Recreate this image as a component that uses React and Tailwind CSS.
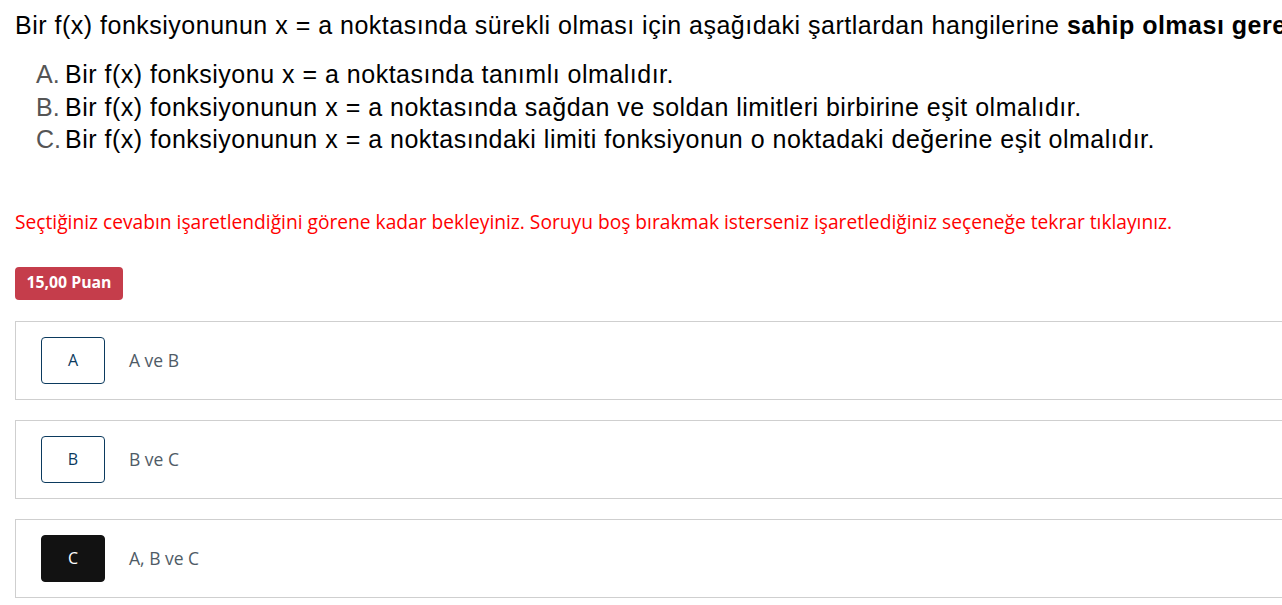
const options = [
  { key: "A", text: "A ve B", selected: false },
  { key: "B", text: "B ve C", selected: false },
  { key: "C", text: "A, B ve C", selected: true },
];

const items = [
  { key: "A.", text: "Bir f(x) fonksiyonu x = a noktasında tanımlı olmalıdır." },
  { key: "B.", text: "Bir f(x) fonksiyonunun x = a noktasında sağdan ve soldan limitleri birbirine eşit olmalıdır." },
  { key: "C.", text: "Bir f(x) fonksiyonunun x = a noktasındaki limiti fonksiyonun o noktadaki değerine eşit olmalıdır." },
];

const App = () => {
  return (
    <div className="w-full min-h-screen overflow-hidden bg-white">
      <div className="w-[1400px] px-[15px] pt-[9px]">
        {/* question runs past the viewport, clipped like the original page */}
        <p className="font-['Liberation_Sans',Arial,sans-serif] text-[25px] leading-[32px] tracking-[0.5px] text-black whitespace-nowrap">
          Bir f(x) fonksiyonunun x = a noktasında sürekli olması için aşağıdaki şartlardan hangilerine{" "}
          <b>sahip olması gerekir?</b>
        </p>

        <ul className="mt-[17px] pl-[21px] font-['Liberation_Sans',Arial,sans-serif] text-[25px] leading-[32.5px] tracking-[0.5px] text-black">
          {items.map((it) => (
            <li key={it.key} className="flex whitespace-nowrap">
              <span className="w-[29px] text-[#555] font-light tracking-normal">{it.key}</span>
              <span>{it.text}</span>
            </li>
          ))}
        </ul>

        <p className="mt-[54px] font-['Open_Sans',sans-serif] text-[19.2px] leading-[24px] text-[#ff0000] whitespace-nowrap">
          Seçtiğiniz cevabın işaretlendiğini görene kadar bekleyiniz. Soruyu boş bırakmak isterseniz işaretlediğiniz seçeneğe tekrar tıklayınız.
        </p>

        <div className="mt-[33px] inline-flex h-[33px] w-[108px] items-center justify-center rounded-[4px] bg-[#c53d4b] font-['Open_Sans',sans-serif] text-[15.8px] font-bold text-white">
          15,00 Puan
        </div>

        <div className="mt-[21px] flex flex-col gap-[20px] font-['Open_Sans',sans-serif]">
          {options.map((o) => (
            <div
              key={o.key}
              className="flex h-[79px] items-center border border-[#cfcfcf] pl-[25px]"
            >
              <div
                className={
                  o.selected
                    ? "flex h-[47px] w-[64px] items-center justify-center rounded-[4px] border border-[#121212] bg-[#121212] text-[16px] text-white"
                    : "flex h-[47px] w-[64px] items-center justify-center rounded-[4px] border border-[#0b3a5e] bg-white text-[16px] text-[#0b3a5e]"
                }
              >
                {o.key}
              </div>
              <span className="ml-[24px] text-[17.5px] text-[#4f5b66]">{o.text}</span>
            </div>
          ))}
        </div>
      </div>
    </div>
  );
};

export default App;
